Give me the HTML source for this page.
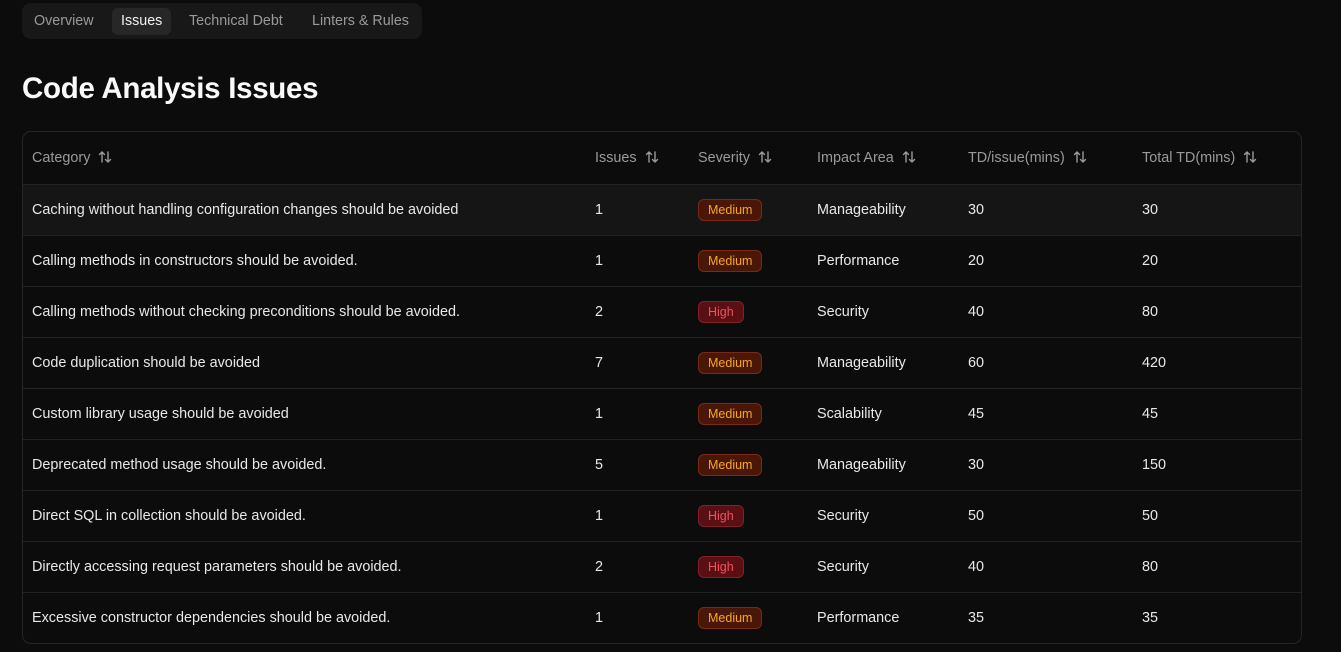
<!DOCTYPE html>
<html><head><style>
*{box-sizing:border-box;margin:0;padding:0}
body{width:1341px;height:652px;background:#0c0c0c;font-family:"Liberation Sans",sans-serif;color:#e8e8e8;overflow:hidden;position:relative}
.tabs{position:absolute;left:22px;top:3px;width:400px;height:36px;background:#181818;border-radius:9px}
.tab{position:absolute;top:5px;height:27px;line-height:27px;font-size:14.3px;color:#9a9a9a}
.tab.act{background:#272727;color:#f2f2f2;border-radius:6px;padding:0 9px}
h1{position:absolute;left:22px;top:72px;font-size:29.5px;font-weight:bold;color:#fafafa;letter-spacing:-0.3px}
.tbl{position:absolute;left:22px;top:131px;width:1280px;height:513px;border:1px solid #262626;border-radius:9px;overflow:hidden}
.row{position:absolute;left:0;width:100%;height:51px;border-top:1px solid #222;font-size:14.4px}
.row span{position:absolute;top:17px;white-space:nowrap}
.hd{top:0;height:52px;border-top:none;color:#9a9a9a}
.hd span{top:18px}
.hd svg{vertical-align:-2px;margin-left:8px}
.b{top:14px!important;height:22px;line-height:20px;padding:0 9px;border-radius:6px;font-size:12.5px}
.m{background:#4a1608;border:1px solid #7a2a14;color:#f7a81c}
.h{background:#5a0f14;border:1px solid #82212a;color:#f4505c}
</style></head><body>
<div class="tabs">
<div class="tab" style="left:12px">Overview</div>
<div class="tab act" style="left:90px">Issues</div>
<div class="tab" style="left:167px">Technical Debt</div>
<div class="tab" style="left:290px">Linters &amp; Rules</div>
</div>
<h1>Code Analysis Issues</h1>
<svg width="0" height="0" style="position:absolute"><defs><symbol id="s" viewBox="0 0 14 14"><path d="M4 12V2M1.5 4.5L4 2l2.5 2.5M10 2v10M7.5 9.5L10 12l2.5-2.5" fill="none" stroke="#9a9a9a" stroke-width="1.4" stroke-linecap="round" stroke-linejoin="round"/></symbol></defs></svg>
<div class="tbl">
<div class="row hd"><span style="left:9px">Category<svg width="14" height="14"><use href="#s"/></svg></span><span style="left:572px">Issues<svg width="14" height="14"><use href="#s"/></svg></span><span style="left:675px">Severity<svg width="14" height="14"><use href="#s"/></svg></span><span style="left:794px">Impact Area<svg width="14" height="14"><use href="#s"/></svg></span><span style="left:945px">TD/issue(mins)<svg width="14" height="14"><use href="#s"/></svg></span><span style="left:1119px">Total TD(mins)<svg width="14" height="14"><use href="#s"/></svg></span></div>
<div class="row" style="top:52px;background:#151515"><span style="left:9px">Caching without handling configuration changes should be avoided</span><span style="left:572px">1</span><span class="b m" style="left:675px">Medium</span><span style="left:794px">Manageability</span><span style="left:945px">30</span><span style="left:1119px">30</span></div>
<div class="row" style="top:103px"><span style="left:9px">Calling methods in constructors should be avoided.</span><span style="left:572px">1</span><span class="b m" style="left:675px">Medium</span><span style="left:794px">Performance</span><span style="left:945px">20</span><span style="left:1119px">20</span></div>
<div class="row" style="top:154px"><span style="left:9px">Calling methods without checking preconditions should be avoided.</span><span style="left:572px">2</span><span class="b h" style="left:675px">High</span><span style="left:794px">Security</span><span style="left:945px">40</span><span style="left:1119px">80</span></div>
<div class="row" style="top:205px"><span style="left:9px">Code duplication should be avoided</span><span style="left:572px">7</span><span class="b m" style="left:675px">Medium</span><span style="left:794px">Manageability</span><span style="left:945px">60</span><span style="left:1119px">420</span></div>
<div class="row" style="top:256px"><span style="left:9px">Custom library usage should be avoided</span><span style="left:572px">1</span><span class="b m" style="left:675px">Medium</span><span style="left:794px">Scalability</span><span style="left:945px">45</span><span style="left:1119px">45</span></div>
<div class="row" style="top:307px"><span style="left:9px">Deprecated method usage should be avoided.</span><span style="left:572px">5</span><span class="b m" style="left:675px">Medium</span><span style="left:794px">Manageability</span><span style="left:945px">30</span><span style="left:1119px">150</span></div>
<div class="row" style="top:358px"><span style="left:9px">Direct SQL in collection should be avoided.</span><span style="left:572px">1</span><span class="b h" style="left:675px">High</span><span style="left:794px">Security</span><span style="left:945px">50</span><span style="left:1119px">50</span></div>
<div class="row" style="top:409px"><span style="left:9px">Directly accessing request parameters should be avoided.</span><span style="left:572px">2</span><span class="b h" style="left:675px">High</span><span style="left:794px">Security</span><span style="left:945px">40</span><span style="left:1119px">80</span></div>
<div class="row" style="top:460px"><span style="left:9px">Excessive constructor dependencies should be avoided.</span><span style="left:572px">1</span><span class="b m" style="left:675px">Medium</span><span style="left:794px">Performance</span><span style="left:945px">35</span><span style="left:1119px">35</span></div>
</div>
</body></html>
